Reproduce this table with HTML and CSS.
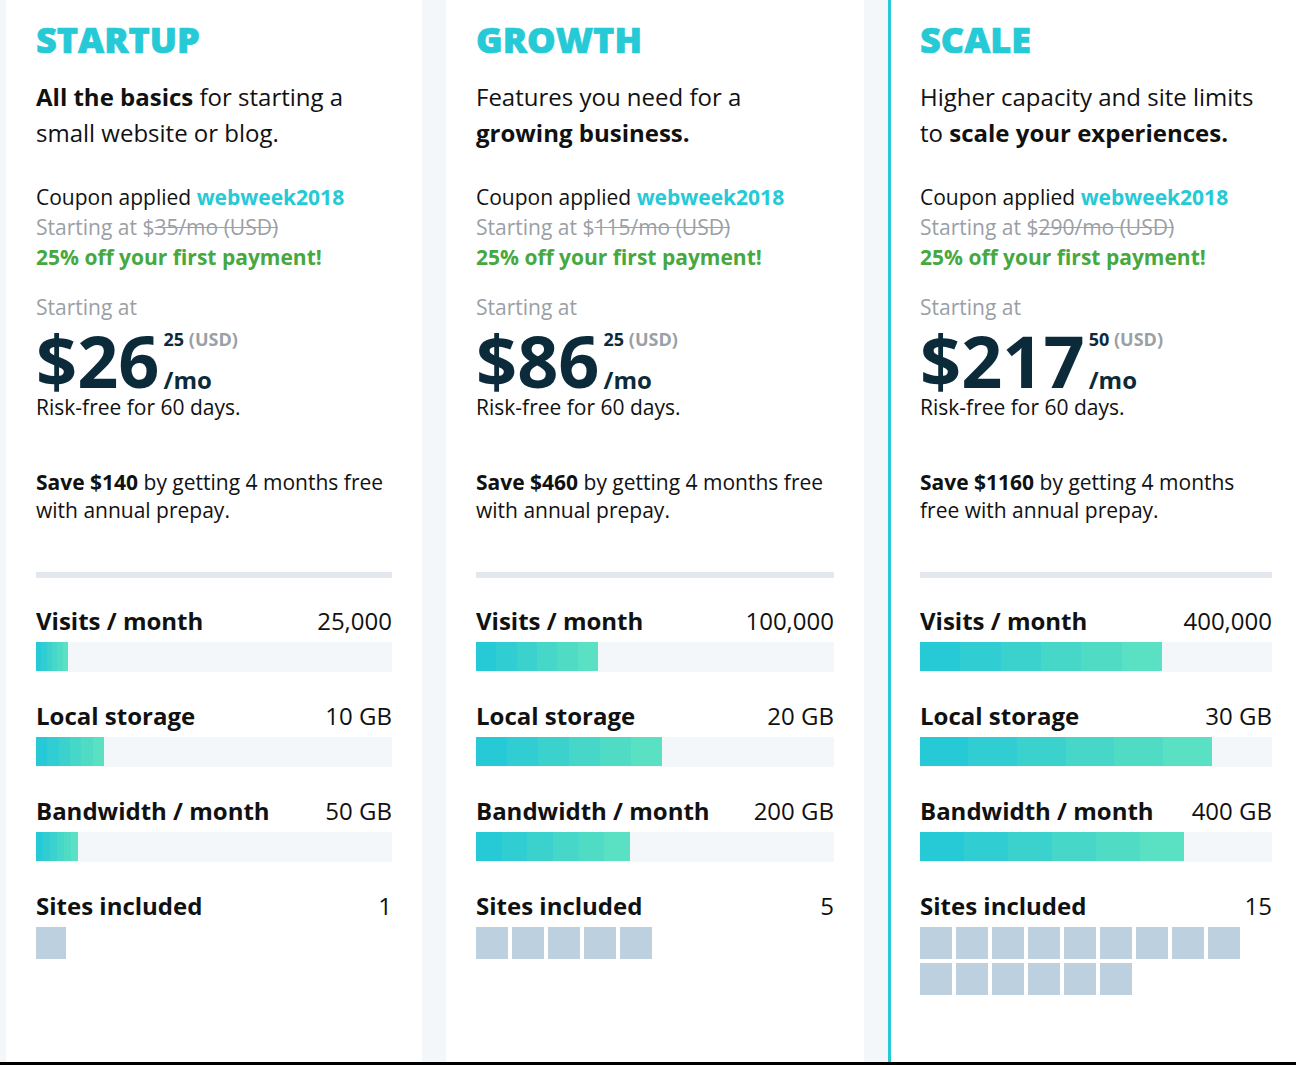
FILE: index.html
```html
<!DOCTYPE html>
<html lang="en">
<head>
<meta charset="utf-8">
<title>Plans</title>
<link rel="stylesheet" href="styles.css">
</head>
<body>
<main class="plans">
  <section class="card">
    <h2 class="card__title">STARTUP</h2>
    <p class="card__tagline"><strong>All the basics</strong> for starting a small website or blog.</p>
    <div class="coupon">
      <div>Coupon applied <strong class="coupon__code">webweek2018</strong></div>
      <div class="coupon__old">Starting at $<s>35/mo (USD)</s></div>
      <div class="coupon__off">25% off your first payment!</div>
    </div>
    <div class="start-label">Starting at</div>
    <div class="price">
      <span class="price__amount">$26</span>
      <span class="price__side">
        <span class="price__cents">25 <span class="price__cur">(USD)</span></span>
        <span class="price__per">/mo</span>
      </span>
    </div>
    <div class="risk">Risk-free for 60 days.</div>
    <p class="save"><strong>Save $140</strong> by getting 4 months free with annual prepay.</p>
    <div class="divider"></div>
    <div class="metric">
      <div class="metric__head"><span class="metric__label">Visits / month</span><span class="metric__value">25,000</span></div>
      <div class="bar"><div class="bar__fill" style="width:32px"></div></div>
    </div>
    <div class="metric">
      <div class="metric__head"><span class="metric__label">Local storage</span><span class="metric__value">10 GB</span></div>
      <div class="bar"><div class="bar__fill" style="width:68px"></div></div>
    </div>
    <div class="metric">
      <div class="metric__head"><span class="metric__label">Bandwidth / month</span><span class="metric__value">50 GB</span></div>
      <div class="bar"><div class="bar__fill" style="width:42px"></div></div>
    </div>
    <div class="metric">
      <div class="metric__head"><span class="metric__label">Sites included</span><span class="metric__value">1</span></div>
      <div class="sites"><span class="site site--narrow"></span></div>
    </div>
  </section>

  <section class="card">
    <h2 class="card__title">GROWTH</h2>
    <p class="card__tagline">Features you need for a <strong>growing business.</strong></p>
    <div class="coupon">
      <div>Coupon applied <strong class="coupon__code">webweek2018</strong></div>
      <div class="coupon__old">Starting at $<s>115/mo (USD)</s></div>
      <div class="coupon__off">25% off your first payment!</div>
    </div>
    <div class="start-label">Starting at</div>
    <div class="price">
      <span class="price__amount">$86</span>
      <span class="price__side">
        <span class="price__cents">25 <span class="price__cur">(USD)</span></span>
        <span class="price__per">/mo</span>
      </span>
    </div>
    <div class="risk">Risk-free for 60 days.</div>
    <p class="save"><strong>Save $460</strong> by getting 4 months free with annual prepay.</p>
    <div class="divider"></div>
    <div class="metric">
      <div class="metric__head"><span class="metric__label">Visits / month</span><span class="metric__value">100,000</span></div>
      <div class="bar"><div class="bar__fill" style="width:122px"></div></div>
    </div>
    <div class="metric">
      <div class="metric__head"><span class="metric__label">Local storage</span><span class="metric__value">20 GB</span></div>
      <div class="bar"><div class="bar__fill" style="width:186px"></div></div>
    </div>
    <div class="metric">
      <div class="metric__head"><span class="metric__label">Bandwidth / month</span><span class="metric__value">200 GB</span></div>
      <div class="bar"><div class="bar__fill" style="width:154px"></div></div>
    </div>
    <div class="metric">
      <div class="metric__head"><span class="metric__label">Sites included</span><span class="metric__value">5</span></div>
      <div class="sites">
        <span class="site"></span><span class="site"></span><span class="site"></span><span class="site"></span><span class="site"></span>
      </div>
    </div>
  </section>

  <section class="card card--featured">
    <h2 class="card__title">SCALE</h2>
    <p class="card__tagline">Higher capacity and site limits to <strong>scale your experiences.</strong></p>
    <div class="coupon">
      <div>Coupon applied <strong class="coupon__code">webweek2018</strong></div>
      <div class="coupon__old">Starting at $<s>290/mo (USD)</s></div>
      <div class="coupon__off">25% off your first payment!</div>
    </div>
    <div class="start-label">Starting at</div>
    <div class="price">
      <span class="price__amount">$217</span>
      <span class="price__side">
        <span class="price__cents">50 <span class="price__cur">(USD)</span></span>
        <span class="price__per">/mo</span>
      </span>
    </div>
    <div class="risk">Risk-free for 60 days.</div>
    <p class="save"><strong>Save $1160</strong> by getting 4 months free with annual prepay.</p>
    <div class="divider"></div>
    <div class="metric">
      <div class="metric__head"><span class="metric__label">Visits / month</span><span class="metric__value">400,000</span></div>
      <div class="bar"><div class="bar__fill" style="width:242px"></div></div>
    </div>
    <div class="metric">
      <div class="metric__head"><span class="metric__label">Local storage</span><span class="metric__value">30 GB</span></div>
      <div class="bar"><div class="bar__fill" style="width:292px"></div></div>
    </div>
    <div class="metric">
      <div class="metric__head"><span class="metric__label">Bandwidth / month</span><span class="metric__value">400 GB</span></div>
      <div class="bar"><div class="bar__fill" style="width:264px"></div></div>
    </div>
    <div class="metric">
      <div class="metric__head"><span class="metric__label">Sites included</span><span class="metric__value">15</span></div>
      <div class="sites">
        <span class="site"></span><span class="site"></span><span class="site"></span><span class="site"></span><span class="site"></span>
        <span class="site"></span><span class="site"></span><span class="site"></span><span class="site"></span><span class="site"></span>
        <span class="site"></span><span class="site"></span><span class="site"></span><span class="site"></span><span class="site"></span>
      </div>
    </div>
  </section>
</main>
</body>
</html>
```

FILE: styles.css
```css
* { box-sizing: border-box; }

html, body {
  margin: 0;
  padding: 0;
}

body {
  width: 1296px;
  height: 1065px;
  overflow: hidden;
  background: #f3f7fa;
  font-family: "Open Sans", "DejaVu Sans", sans-serif;
  color: #111;
}

.plans {
  display: grid;
  grid-template-columns: 416px 418px 408px;
  column-gap: 24px;
  padding-left: 6px;
  height: 1065px;
  border-bottom: 3px solid #000;
}

.card {
  background: #fff;
  padding: 17px 30px 0 30px;
  display: flex;
  flex-direction: column;
}

.card--featured {
  border-left: 3px solid #26c9d6;
  padding-left: 29px;
  padding-right: 24px;
}

.card__title {
  margin: 0;
  font-size: 36px;
  line-height: 46px;
  font-weight: 800;
  color: #26c9d6;
  -webkit-text-stroke: 0.7px #26c9d6;
  letter-spacing: 0;
}

.card__tagline {
  margin: 16px 0 0;
  font-size: 24px;
  line-height: 36px;
  font-weight: 400;
}

.card__tagline strong { font-weight: 700; }

.coupon {
  margin-top: 31px;
  font-size: 21px;
  line-height: 30px;
}

.coupon__code {
  color: #26c9d6;
  font-weight: 700;
}

.coupon__old {
  color: #9aa0a5;
}

.coupon__old s {
  text-decoration-thickness: 1px;
}

.coupon__off {
  color: #46a83e;
  font-weight: 700;
}

.start-label {
  margin-top: 20px;
  font-size: 21px;
  line-height: 30px;
  color: #9aa0a5;
}

.price {
  display: flex;
  margin-top: 5px;
  color: #0b2a3a;
}

.price__amount {
  font-size: 72px;
  line-height: 66px;
  font-weight: 700;
}

.price__side {
  display: flex;
  flex-direction: column;
  justify-content: space-between;
  margin-left: 4px;
  padding: 2px 0 1px;
  font-weight: 700;
}

.price__cents {
  font-size: 18px;
  line-height: 20px;
}

.price__cur { color: #9aa0a5; }

.price__per {
  font-size: 24px;
  line-height: 24px;
}

.risk {
  font-size: 21px;
  line-height: 28px;
}

.save {
  margin: 47px 0 0;
  font-size: 21px;
  line-height: 28px;
}

.save strong { font-weight: 700; }

.divider {
  margin-top: 48px;
  height: 6px;
  background: #e2e8ed;
}

.metric {
  margin-top: 28px;
}

.metric + .metric {
  margin-top: 29px;
}

.metric__head {
  display: flex;
  justify-content: space-between;
  align-items: baseline;
  font-size: 24px;
  line-height: 30px;
}

.metric__label { font-weight: 700; }

.metric__value { font-weight: 400; }

.bar {
  margin-top: 6px;
  height: 30px;
  background: #f3f7fa;
}

.bar__fill {
  height: 29px;
  background: linear-gradient(90deg,
    #26c9d6 0 16.6%,
    #30cdd2 16.6% 33.3%,
    #3bd2ce 33.3% 50%,
    #46d7c9 50% 66.6%,
    #50dbc5 66.6% 83.3%,
    #5ae0c2 83.3% 100%);
}

.sites {
  margin-top: 6px;
  display: flex;
  flex-wrap: wrap;
  gap: 4px;
}

.site {
  width: 32px;
  height: 32px;
  background: #bdd0df;
}

.site--narrow { width: 30px; }
```
